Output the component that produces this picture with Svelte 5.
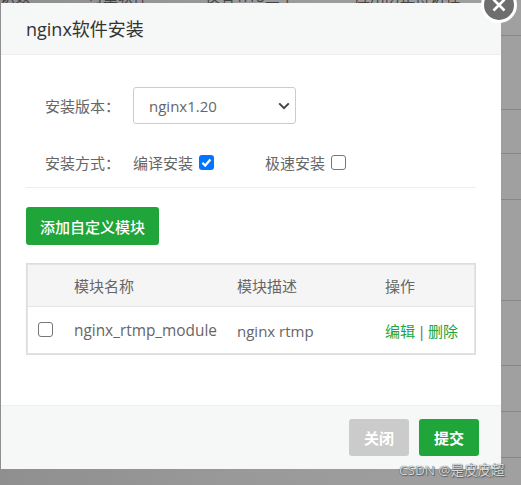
<script>
  const modules = [{ name: 'nginx_rtmp_module', desc: 'nginx rtmp' }]
  const behind = [32, 73, 43, 45, 100, 64, 45, 45, 38]
</script>

<div class="page">
  <div class="backdrop">
    <div class="peek">
      <span class="p1">识数</span><span class="p2">可重软件</span><span class="p3">仅有1.18三个</span><span class="p4">应用防止博访程</span>
    </div>
    {#each behind as h}
      <div class="bg-row" style="height: {h}px"></div>
    {/each}
  </div>

  <div class="modal">
    <header class="head">nginx软件安装</header>

    <div class="body">
      <div class="line version">
        <span class="label">安装版本：</span>
        <div class="select">
          <span>nginx1.20</span>
          <svg viewBox="0 0 12 8" width="12" height="8" fill="none" aria-hidden="true">
            <path d="M1.2 1.4L6 6.2L10.8 1.4" stroke="#444" stroke-width="2" />
          </svg>
        </div>
      </div>

      <div class="line method">
        <span class="label">安装方式：</span>
        <label class="opt first">编译安装
          <span class="box checked">
            <svg viewBox="0 0 16 16" width="15" height="15" fill="none" aria-hidden="true">
              <path d="M3.6 8.2L6.6 11.2L12.2 4.8" stroke="#fff" stroke-width="2.4" />
            </svg>
          </span>
        </label>
        <label class="opt">极速安装 <span class="box"></span></label>
      </div>

      <button class="add">添加自定义模块</button>

      <table>
        <thead>
          <tr>
            <th class="c-check"></th>
            <th class="c-name">模块名称</th>
            <th class="c-desc">模块描述</th>
            <th>操作</th>
          </tr>
        </thead>
        <tbody>
          {#each modules as m}
            <tr>
              <td class="c-check"><span class="box"></span></td>
              <td class="mod">{m.name}</td>
              <td>{m.desc}</td>
              <td class="ops"><span class="link">编辑</span> | <span class="link">删除</span></td>
            </tr>
          {/each}
        </tbody>
      </table>
    </div>

    <footer class="foot">
      <button class="btn grey">关闭</button>
      <button class="btn green">提交</button>
    </footer>

    <div class="close" aria-label="关闭">
      <svg viewBox="0 0 14 14" width="14" height="14" fill="none" aria-hidden="true">
        <path d="M1.5 1.5L12.5 12.5M12.5 1.5L1.5 12.5" stroke="#fff" stroke-width="2.6" />
      </svg>
    </div>
  </div>

  <div class="mark">CSDN @是皮皮超</div>
</div>

<style>
  :global(body) {
    margin: 0;
    background: #9a9a9a;
  }

  .page {
    position: relative;
    width: 521px;
    height: 485px;
    overflow: hidden;
    font-family: "Open Sans", "Noto Sans CJK SC", sans-serif;
    color: #666;
    font-size: 15px;
  }

  /* ── Page dimmed behind the dialog ── */
  .backdrop {
    height: 100%;
    background: linear-gradient(90deg, #8f8f8f 0%, #9a9a9a 50%, #a0a0a0 100%);
  }
  .peek {
    display: flex;
    height: 3px;
    overflow: hidden;
    color: #444;
    font-size: 15px;
    line-height: 3px;
    white-space: nowrap;
  }
  .peek span {
    transform: translateY(-5px);
  }
  .p1 { width: 88px; }
  .p2 { width: 117px; }
  .p3 { width: 150px; }
  .bg-row {
    border-bottom: 1px solid #878787;
  }

  /* ── Dialog ── */
  .modal {
    position: absolute;
    left: 1px;
    top: 3px;
    width: 500px;
    height: 466px;
    display: flex;
    flex-direction: column;
    background: #fff;
  }
  .head {
    height: 52px;
    box-sizing: border-box;
    padding-left: 25px;
    line-height: 52px;
    font-size: 18px;
    color: #333;
    background: #f6f7f7;
    border-bottom: 1px solid #eee;
  }
  .body {
    flex: 1;
    padding: 0 25px;
  }
  .line {
    display: flex;
    align-items: center;
  }
  .label {
    width: 88px;
    padding-left: 19px;
    flex-shrink: 0;
  }
  .version {
    margin-top: 32px;
  }
  .select {
    width: 163px;
    height: 37px;
    box-sizing: border-box;
    display: flex;
    align-items: center;
    justify-content: space-between;
    padding: 0 5px 0 15px;
    border: 1px solid #ccc;
    border-radius: 3px;
    color: #666;
  }
  .method {
    height: 64px;
    border-bottom: 1px solid #eee;
    padding-top: 13px;
    box-sizing: border-box;
  }
  .opt {
    display: flex;
    align-items: center;
    gap: 6px;
  }
  .opt.first {
    width: 132px;
  }
  .box {
    display: inline-flex;
    align-items: center;
    justify-content: center;
    width: 15px;
    height: 15px;
    box-sizing: border-box;
    border: 1px solid #767676;
    border-radius: 3px;
    background: #fff;
  }
  .box.checked {
    border: none;
    background: #0075ff;
  }

  .add {
    display: block;
    width: 133px;
    height: 38px;
    margin-top: 19px;
    padding: 0;
    border: none;
    border-radius: 3px;
    background: #20a53a;
    color: #fff;
    font: 500 15px "Open Sans", "Noto Sans CJK SC", sans-serif;
  }

  /* ── Module table ── */
  table {
    width: 450px;
    margin-top: 18px;
    border: 1px solid #ddd;
    border-collapse: separate;
    border-spacing: 0;
    table-layout: fixed;
    outline: 1px solid #e4e4e4;
    outline-offset: -2px;
  }
  th {
    height: 42px;
    padding: 0;
    text-align: left;
    font-weight: 400;
    font-size: 15px;
    background: #f5f5f5;
    border-bottom: 1px solid #e4e4e4;
  }
  td {
    height: 47px;
    padding: 0;
    font-size: 15px;
  }
  .c-check {
    width: 47px;
  }
  td.c-check {
    padding-left: 11px;
    width: 36px;
  }
  .c-name {
    width: 163px;
  }
  .c-desc {
    width: 148px;
  }
  .mod {
    font-size: 15.4px;
  }
  .ops {
    word-spacing: -1.5px;
  }
  .link {
    color: #20a53a;
  }

  /* ── Footer ── */
  .foot {
    height: 64px;
    display: flex;
    align-items: center;
    justify-content: flex-end;
    gap: 10px;
    padding-right: 22px;
    background: #f6f8f8;
    border-top: 1px solid #eef0f0;
    box-sizing: border-box;
  }
  .btn {
    width: 60px;
    height: 37px;
    padding: 0;
    border: none;
    border-radius: 3px;
    color: #fff;
    font: 700 15px "Open Sans", "Noto Sans CJK SC", sans-serif;
  }
  .grey {
    background: #cbcbcb;
  }
  .green {
    background: #20a53a;
  }

  /* ── Close button hanging off the corner ── */
  .close {
    position: absolute;
    left: 480px;
    top: -16px;
    width: 36px;
    height: 36px;
    box-sizing: border-box;
    border: 3px solid #fff;
    border-radius: 50%;
    background: #6e6e6e;
    display: flex;
    align-items: center;
    justify-content: center;
  }

  .mark {
    position: absolute;
    left: 399px;
    top: 459px;
    font-size: 13.5px;
    color: #d8d8d8;
    text-shadow: 0 0 1px #333, 1px 1px 1px #666;
    white-space: nowrap;
  }
</style>
